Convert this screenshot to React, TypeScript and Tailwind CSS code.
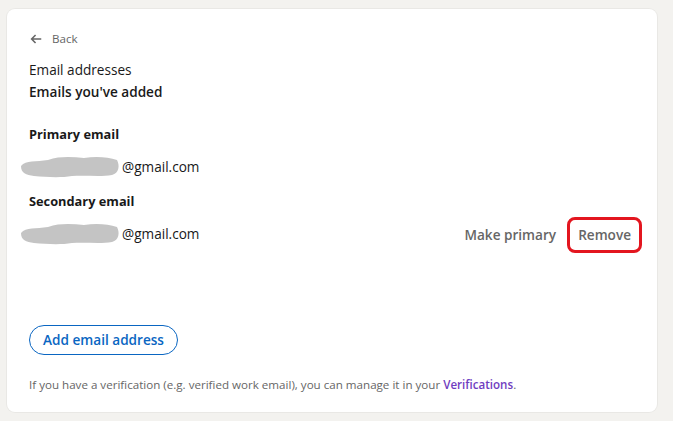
import React from "react";

function Scribble() {
  return (
    <svg width="100" height="22" viewBox="0 0 100 22" className="shrink-0 h-[22px] w-[100px]">
      <path
        d="M1 10 C6 4 16 6 28 4 C40 0 52 1 64 2 C76 0 88 1 97 4 C100 10 99 17 92 19 C80 21 66 19 52 20 C40 22 26 21 14 20 C6 19 1 17 1 10 Z"
        fill="#c4c4c4"
      />
    </svg>
  );
}

function EmailRow({ label, actions }: { label: string; actions?: boolean }) {
  return (
    <div>
      <h3 className="text-[12.8px] font-bold text-[#191919] leading-5">{label}</h3>
      <div className="mt-[13px] flex items-center justify-between h-5">
        <div className="flex items-center -ml-[9px]">
          <Scribble />
          <span className="text-[13.6px] text-[#191919] ml-[2px]">@gmail.com</span>
        </div>
        {actions && (
          <div className="flex items-center gap-[11px] -mr-[7px] mt-[1px]">
            <button className="text-[13.6px] font-semibold text-[#666666] px-0">Make primary</button>
            <div className="rounded-[8px] border-[3px] border-[#e3161f] px-[8px] py-[5px]">
              <button className="text-[13.6px] font-semibold text-[#666666] block">Remove</button>
            </div>
          </div>
        )}
      </div>
    </div>
  );
}

export default function App() {
  return (
    <div
      className="min-h-[421px] w-[673px] bg-[#f3f2ef] pt-[9px] pl-[7px]"
      style={{ fontFamily: '"Segoe UI", "Open Sans", sans-serif' }}
    >
      <div className="w-[650px] h-[403px] bg-white rounded-[8px] shadow-[0_0_0_1px_rgba(0,0,0,0.04)] px-[22px] pt-[21px]">
        <button className="flex items-center gap-[9px] text-[11.6px] text-[#666666]">
          <svg width="14" height="14" viewBox="0 0 16 16" fill="none" stroke="#666666" strokeWidth="1.8">
            <path d="M14 8H3M7.5 3.5L3 8l4.5 4.5" />
          </svg>
          Back
        </button>
        <div className="mt-[12px] text-[13.6px] text-[#191919] leading-[22px]">Email addresses</div>
        <div className="text-[13.6px] font-semibold text-[#191919] leading-[22px]">Emails you've added</div>

        <div className="mt-[21px] flex flex-col gap-[14px]">
          <EmailRow label="Primary email" />
          <EmailRow label="Secondary email" actions />
        </div>

        <button className="mt-[81px] h-[30px] px-[13px] rounded-full border border-[#0a66c2] text-[13.6px] font-semibold text-[#0a66c2]">
          Add email address
        </button>

        <p className="mt-[21px] text-[11.6px] text-[#666666]">
          If you have a verification (e.g. verified work email), you can manage it in your{" "}
          <span className="font-semibold text-[#6f3dc0]">Verifications</span>.
        </p>
      </div>
    </div>
  );
}
